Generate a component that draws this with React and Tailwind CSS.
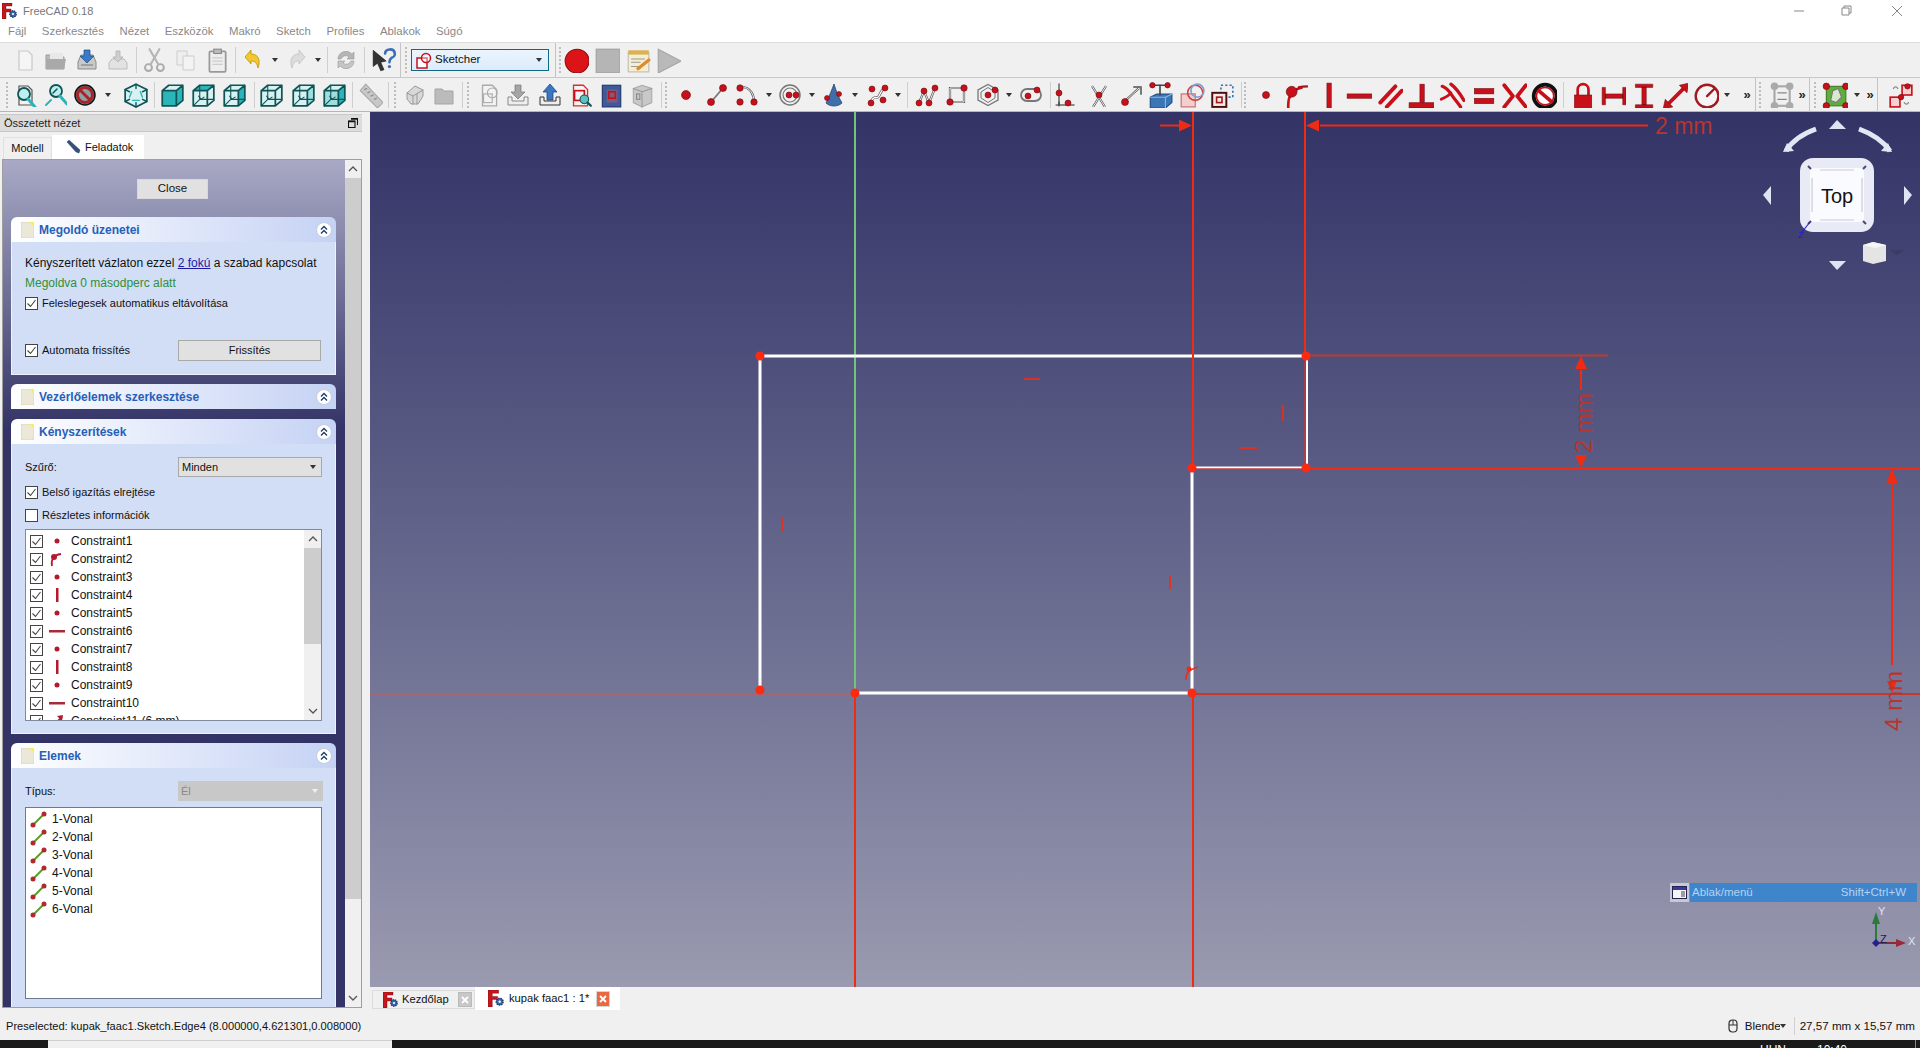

import React from "react";

const RED = "#c8101a", DK = "#6e0a10", TEAL = "#2bb5b8", TD = "#0f5557";
const D = ({ x, y, r = 3 }) => <circle cx={x} cy={y} r={r} fill={RED} stroke={DK} strokeWidth=".6" />;
const S = ({ s = 24, children }) => <svg width={s} height={s} viewBox="0 0 24 24" className="block shrink-0">{children}</svg>;
const G = ({ d, w = 1.6, c = "#444", f = "none" }) => <path d={d} stroke={c} strokeWidth={w} fill={f} strokeLinecap="round" strokeLinejoin="round" />;
const W = ({ d, w = 2.2 }) => <><path d={d} stroke="#555" strokeWidth={w} fill="none" /><path d={d} stroke="#fff" strokeWidth={w - 1.3} fill="none" /></>;

const Cube = ({ f = "#d9f1f1", t = "#d9f1f1", r = "#d9f1f1", inner }) => (
  <S s={26}>
    <polygon points="3,8 16,8 16,22 3,22" fill={f} />
    <polygon points="3,8 9,3 22,3 16,8" fill={t} />
    <polygon points="16,8 22,3 22,17 16,22" fill={r} />
    <G d="M3 8h13v14H3zM3 8l6-5h13v14l-6 5M16 8l6-5" c={TD} w="1.6" />
    {inner && <G d="M9 3v13H22M9 16l-6 6" c={TD} w="1" />}
    {inner && <G d="M8 13l2 3 3-2" c={TD} w="1" />}
  </S>
);
const Iso = () => (
  <S s={26}>
    <polygon points="12,2 22,7 22,18 12,23 2,18 2,7" fill="#d9f1f1" stroke={TD} strokeWidth="1.6" />
    <G d="M2 7l4 2M22 7l-4 2M12 23v-4M12 2v4M2 18l4-2M22 18l-4-2" c={TD} w="1.3" />
    <G d="M8 9l-2 5M16 9l2 5M9 17h6" c={TEAL} w="1.3" />
  </S>
);
const Mag = ({ x = 10, y = 9 }) => <><circle cx={x} cy={y} r="6" fill="#bfeeee" stroke={TD} strokeWidth="1.8" /><G d={`M${x + 4} ${y + 5}l7 8`} c={TEAL} w="3" /></>;

const Logo = ({ s = 16 }) => (
  <svg width={s} height={s} viewBox="0 0 16 16" className="block shrink-0">
    <path d="M0 0h10v3H4v3h5v3H4v7H0z" fill="#c4161c" stroke="#6b0a0a" strokeWidth=".4" />
    <circle cx="11" cy="11" r="3.2" fill="#3a66a8" stroke="#1d3d73" strokeWidth="1.4" strokeDasharray="1.4 .8" />
    <circle cx="11" cy="11" r="1.1" fill="#fff" />
  </svg>
);

const Arrow = () => <div className="w-0 h-0 shrink-0 border-x-[3.5px] border-x-transparent border-t-[4px] border-t-[#333]" />;
const More = () => <span className="shrink-0 text-[13px] font-bold text-[#222] leading-none">»</span>;
const Sep = () => <div className="w-px shrink-0 h-[26px] bg-[#cfcfcf]" />;
const Full = () => <div className="w-px shrink-0 h-[34px] bg-[#c4c4c4]" />;
const Handle = () => <div className="w-[2px] shrink-0 h-[26px] border-l-2 border-dotted border-[#bdbdbd]" />;

const Bar = ({ items, h }) => (
  <div className={`flex items-center ${h}`}>
    {items.map((it, i) => (
      <div key={i} className="w-0 h-full flex items-center justify-center shrink-0" style={{ marginLeft: it[0] - (i ? items[i - 1][0] : 0) }}>
        {it[1]}
      </div>
    ))}
  </div>
);

const Page = ({ c = "#f5f5f5", b = "#c9c9c9" }) => <path d="M6 3h9l4 4v15H6z" fill={c} stroke={b} strokeWidth="1.2" />;

const t1 = [
  [25, <S><Page /></S>],
  [56, <S><path d="M2 7h7l2 2h9v12H2z" fill="#b9b9b9" stroke="#9a9a9a" /><path d="M6 5h13v6H6z" fill="#e8e8e8" /><path d="M2 11h20l-2 10H2z" fill="#a9a9a9" /></S>],
  [87, <S><path d="M3 14l3-7h12l3 7v7H3z" fill="#c9c9c9" stroke="#8a8a8a" /><path d="M9 2h6v6h4l-7 7-7-7h4z" fill="#3a7bc8" stroke="#1d4a86" strokeWidth=".7" /><path d="M6 17h12" stroke="#777" /></S>],
  [118, <S><path d="M3 15l3-4h12l3 4v6H3z" fill="#e2e2e2" stroke="#bbb" /><path d="M10 3h4v6h3l-5 5-5-5h3z" fill="#cfcfcf" stroke="#aaa" strokeWidth=".7" /></S>],
  [136, <Sep />],
  [155, <S s={26}><circle cx="6" cy="19" r="3.2" fill="none" stroke="#aaa" strokeWidth="1.8" /><circle cx="17" cy="19" r="3.2" fill="none" stroke="#aaa" strokeWidth="1.8" /><G d="M8 16L16 2M15 16L7 2" c="#b5b5b5" w="2" /></S>],
  [186, <S><path d="M3 3h10v14H3z" fill="#eee" stroke="#ccc" /><path d="M9 8h11v14H9z" fill="#f3f3f3" stroke="#ccc" /></S>],
  [217, <S s={26}><rect x="5" y="4" width="15" height="19" fill="#eee" stroke="#999" strokeWidth="1.6" rx="1" /><rect x="9" y="2" width="7" height="4" fill="#bbb" stroke="#888" /><G d="M8 10h9M8 13h9M8 16h9" c="#ccc" w="1" /></S>],
  [235, <Sep />],
  [253, <S><path d="M4 9l6-7v4c7 0 10 6 7 14-1-5-3-7-7-7v3z" fill="#f2c82e" stroke="#b98f12" strokeWidth=".8" /></S>],
  [275, <Arrow />],
  [297, <S><path d="M20 9l-6-7v4C7 6 4 12 7 20c1-5 3-7 7-7v3z" fill="#dcdcdc" stroke="#c2c2c2" strokeWidth=".8" /></S>],
  [318, <Arrow />],
  [327, <Sep />],
  [346, <S><path d="M4 11a8 8 0 0 1 14-5l2-2v7h-7l2-2a5 5 0 0 0-8 2z" fill="#b5b5b5" stroke="#999" strokeWidth=".6" /><path d="M20 13a8 8 0 0 1-14 5l-2 2v-7h7l-2 2a5 5 0 0 0 8-2z" fill="#c5c5c5" stroke="#999" strokeWidth=".6" /></S>],
  [364, <Sep />],
  [384, <S s={26}><path d="M2 3l0 15 4-3 3 7 3-1-3-7 5-1z" fill="#333" stroke="#111" strokeWidth=".5" /><G d="M13 6a4.5 4 0 1 1 6 4c-1.500 1-2 2-2 4" c="#3a6fb5" w="2.4" /><circle cx="17" cy="18" r="1.500" fill="#3a6fb5" /></S>],
  [400, <Full />],
  [406, <Handle />],
  [480, (
    <div className="w-[138px] h-[22px] shrink-0 flex items-center bg-gradient-to-b from-[#ebf4fc] to-[#dcecfc] border border-[#0f6a86] pl-[4px] pr-[6px] gap-[2px] text-[#111] text-[11.5px]">
      <svg width="17" height="17" viewBox="0 0 17 17" className="block shrink-0"><rect x="1" y="6" width="10" height="10" fill="#fff" stroke={RED} strokeWidth="1.500" /><circle cx="10" cy="6" r="4.500" fill="#fff" fillOpacity=".4" stroke={RED} strokeWidth="1.500" /></svg>
      <span className="flex-1">Sketcher</span>
      <Arrow />
    </div>
  )],
  [555, <Full />],
  [560, <Handle />],
  [576, <S s={26}><circle cx="13" cy="13" r="11" fill="#dc1418" stroke="#8a0d10" strokeWidth="1" /></S>],
  [607, <S s={26}><rect x="2" y="2" width="22" height="22" fill="#b5b5b5" stroke="#a0a0a0" /></S>],
  [638, <S s={26}><rect x="3" y="5" width="19" height="18" fill="#f5efd0" stroke="#bbb" /><rect x="3" y="3" width="19" height="4" fill="#d9b25a" /><G d="M6 11h12M6 14h8M6 18h7" c="#999" w="1" /><G d="M12 20l10-8" c="#e08a28" w="3" /></S>],
  [668, <S s={26}><polygon points="3,2 24,13 3,24" fill="#b9b9b9" stroke="#a5a5a5" /></S>],
];

const t2 = [
  [7, <Handle />],
  [25, <S><Page c="#f3f3f3" b="#555" /><Mag x={11} y={11} /></S>],
  [55, <S><Mag x={13} y={8} /><G d="M3 22l5-5" c={TEAL} w="2" /><G d="M14 6l-4 4" c={TD} w="1.500" /></S>],
  [85, <S><circle cx="12" cy="12" r="10" fill="#2aa0a0" stroke="#111" strokeWidth="1.500" /><circle cx="12" cy="12" r="7.500" fill="#88a5a5" stroke="#b02028" strokeWidth="3" /><path d="M6 6l12 12" stroke="#b02028" strokeWidth="3" /></S>],
  [108, <Arrow />],
  [136, <Iso />],
  [154, <Sep />],
  [172, <Cube f={TEAL} t="#d9f1f1" r={TEAL} />],
  [203, <Cube f="#d9f1f1" t={TEAL} r="#d9f1f1" inner />],
  [234, <Cube f="#d9f1f1" t="#d9f1f1" r={TEAL} inner />],
  [254, <Sep />],
  [271, <Cube inner />],
  [303, <Cube inner r="#a0dede" />],
  [334, <Cube f="#a0dede" t="#d9f1f1" r={TEAL} inner />],
  [352, <Sep />],
  [370, <S s={26}><path d="M3 8l5-6 16 17-5 5z" fill="#c8c8c8" stroke="#aaa" /><G d="M7 7l2-1M10 10l2-1M13 13l2-1M16 16l2-1" c="#888" w="1" /></S>],
  [388, <Sep />],
  [395, <Handle />],
  [415, <S><path d="M4 10l8-7 8 4v6l-5 8-7 0-4-5z" fill="#d8d8d8" stroke="#999" /><G d="M4 10l6 3v8M10 13l10-6M14 11v10" c="#999" w="1" /></S>],
  [444, <S><path d="M3 6h7l2 2h9v13H3z" fill="#bbb" stroke="#a5a5a5" /></S>],
  [462, <Sep />],
  [468, <Handle />],
  [489, <S s={26}><Page c="#f3f3f3" b="#aaa" /><rect x="7" y="11" width="8" height="8" fill="none" stroke="#aaa" /><circle cx="15" cy="10" r="4.500" fill="none" stroke="#aaa" /></S>],
  [518, <S><path d="M9 2h6v7h4l-7 7-7-7h4z" fill="#a5a5a5" stroke="#777" strokeWidth=".7" /><path d="M2 14v8h20v-8h-4v4H6v-4z" fill="#eee" stroke="#888" /></S>],
  [550, <S><path d="M12 1l7 8h-4v8H9V9H5z" fill="#3a77c0" stroke="#1e4a84" strokeWidth=".8" /><path d="M2 14v8h20v-8h-4v4H6v-4z" fill="#eee" stroke="#333" /></S>],
  [580, <S s={26}><Page c="#f7f2f2" b="#c33" /><rect x="7" y="8" width="9" height="9" fill="none" stroke={RED} strokeWidth="1.500" /><circle cx="16" cy="16" r="4" fill="#5fc0c0" stroke={TD} /><G d="M19 19l3 3" c={TD} w="2" /></S>],
  [611, <S s={26}><rect x="4" y="3" width="17" height="20" fill="#3b5b9b" stroke="#20336a" /><rect x="8" y="7" width="10" height="12" fill="#7b5b80" /><rect x="10" y="9" width="6" height="6" fill="none" stroke={RED} strokeWidth="1.500" /></S>],
  [642, <S s={26}><path d="M4 6l8-3 9 3v13l-9 4-8-4z" fill="#c8c8c8" stroke="#aaa" /><G d="M12 9v14M4 6l8 3 9-3" c="#999" w="1" /><rect x="7" y="11" width="3" height="5" fill="none" stroke="#888" /></S>],
  [661, <Sep />],
  [666, <Handle />],
  [686, <S><D x={12} y={12} r={4.5} /></S>],
  [717, <S><G d="M6 19L18 5" w="1.800" c="#777" /><D x={6} y={19} r={3.500} /><D x={18} y={5} r={3.500} /></S>],
  [747, <S><W d="M6 4C16 4 19 12 19 19" /><D x={5} y={5} r={3.200} /><D x={5} y={19} r={3.200} /><D x={19} y={19} r={3.200} /></S>],
  [769, <Arrow />],
  [790, <S><circle cx="12" cy="12" r="10" fill="none" stroke="#777" strokeWidth="1.500" /><circle cx="12" cy="12" r="7" fill="none" stroke="#777" strokeWidth="1.200" /><D x={11} y={12} r={3} /><D x={18} y={12} r={3} /></S>],
  [812, <Arrow />],
  [834, <S><path d="M12 1C9 9 6 16 4 20c4 4 12 4 16 0C17 15 14 8 12 1z" fill="#3f6ea8" stroke="#23476f" strokeWidth=".8" /><D x={5} y={15} r={2.500} /><D x={17} y={11} r={2.500} /></S>],
  [855, <Arrow />],
  [878, <S><W d="M5 19c3-8 6-2 8-6s3-7 6-8" w="2.600" /><D x={5} y={20} r={3} /><D x={6} y={6} r={3} /><D x={19} y={5} r={3} /><D x={17} y={17} r={3} /></S>],
  [898, <Arrow />],
  [907, <Sep />],
  [927, <S><W d="M4 20L9 8l5 12 6-15" /><D x={4} y={20} r={3} /><D x={9} y={8} r={3} /><D x={14} y={20} r={3} /><D x={20} y={5} r={3} /></S>],
  [957, <S><W d="M5 5h14v14H5z" /><D x={19} y={5} r={3.200} /><D x={5} y={19} r={3.200} /></S>],
  [988, <S><path d="M12 1.500L22 7v10l-10 5.500L2 17V7z" fill="none" stroke="#777" strokeWidth="1.300" /><path d="M12 4.500L19 9v6l-7 4.500L5 15V9z" fill="none" stroke="#777" /><D x={12} y={12} r={3} /><D x={19} y={7} r={3} /></S>],
  [1009, <Arrow />],
  [1031, <S><rect x="2" y="6" width="20" height="12" rx="6" fill="none" stroke="#777" strokeWidth="1.800" /><D x={9} y={13} r={3} /><D x={18} y={7} r={3} /></S>],
  [1050, <Sep />],
  [1065, <S><G d="M6 1v22M7 22h14" c="#666" w="1.500" /><D x={6} y={10} r={3} /><D x={15} y={20} r={3} /><G d="M3 22h3v-3" c="#333" w="1" /></S>],
  [1099, <S><W d="M5 3l13 21M19 3L6 24" /><D x={12} y={12} r={3} /></S>],
  [1131, <S><G d="M15 4h7v7" c="#777" w="2" /><W d="M6 18L20 5" /><D x={6} y={19} r={3.500} /></S>],
  [1160, <S s={26}><path d="M3 14l6-3h14v8l-6 5H3z" fill="#3a76b5" stroke="#1e4a7d" /><path d="M3 14h14v10M17 14l6-3" stroke="#8bb8e0" fill="none" /><G d="M12 3v9" c="#444" w="1.500" /><G d="M5 3h14" c="#444" w="1.500" /><D x={5} y={3} r={2.500} /><D x={19} y={3} r={2.500} /></S>],
  [1192, <S s={26}><rect x="2" y="11" width="13" height="12" fill="#f3b8b8" fillOpacity=".6" stroke="#c66" /><circle cx="15" cy="10" r="7" fill="none" stroke="#c44" strokeWidth="1.500" /><circle cx="17" cy="8" r="6" fill="none" stroke="#7fa0d0" strokeWidth="1.500" /></S>],
  [1222, <S s={26}><rect x="11" y="3" width="11" height="11" fill="none" stroke="#3a6fb5" strokeWidth="1.500" strokeDasharray="2 2" /><rect x="3" y="10" width="13" height="13" fill="#f5eaea" stroke="#4a1010" strokeWidth="1.800" /><rect x="7" y="14" width="5" height="5" fill="none" stroke="#a01818" strokeWidth="1.500" /></S>],
  [1241, <Sep />],
  [1245, <Handle />],
  [1266, <S><D x={12} y={12} r={3.5} /></S>],
  [1296, <S s={26}><path d="M5 25C4 14 7 7 18 5" stroke={RED} strokeWidth="2.500" fill="none" /><D x={8} y={9} r={5} /><path d="M14 5c4-1 6-1 9-1" stroke="#a01818" strokeWidth="2" fill="none" /></S>],
  [1328, <S s={26}><rect x="11" y="1" width="4" height="24" fill={RED} stroke={DK} strokeWidth=".5" /></S>],
  [1359, <S s={26}><rect x="1" y="11" width="24" height="4" fill={RED} stroke={DK} strokeWidth=".5" /></S>],
  [1390, <S s={26}><G d="M3 19L17 4M9 23L23 8" c={RED} w="3.500" /></S>],
  [1421, <S s={26}><path d="M1 19h24v5H1z" fill={RED} stroke={DK} strokeWidth=".5" /><rect x="11" y="2" width="4" height="17" fill={RED} stroke={DK} strokeWidth=".5" /></S>],
  [1452, <S s={26}><G d="M3 4c3 1 6 4 8 7s6 8 9 12" c={RED} w="3" /><G d="M11 2c4 3 8 8 12 15" c={RED} w="3" /><G d="M2 16c4-2 7-3 9-6" c={RED} w="2.5" /></S>],
  [1483, <S s={26}><rect x="4" y="6" width="18" height="5" fill={RED} stroke={DK} strokeWidth=".5" /><rect x="4" y="15" width="18" height="5" fill={RED} stroke={DK} strokeWidth=".5" /></S>],
  [1514, <S s={26}><G d="M3 3l8 10-8 10" c={RED} w="3.500" /><G d="M23 3l-8 10 8 10" c={RED} w="3.500" /></S>],
  [1544, <S s={26}><circle cx="13" cy="13" r="10.500" fill="#fff" stroke="#111" strokeWidth="3.500" /><circle cx="13" cy="13" r="8" fill="none" stroke={RED} strokeWidth="1.500" /><path d="M6 7l14 12" stroke={RED} strokeWidth="3.500" /></S>],
  [1563, <Sep />],
  [1582, <S s={26}><path d="M8 12V7a5 5 0 0 1 10 0v5" fill="none" stroke={RED} strokeWidth="2.500" /><rect x="5" y="12" width="16" height="13" fill={RED} stroke={DK} strokeWidth=".5" /></S>],
  [1613, <S s={26}><path d="M2 5h3v16H2zM21 5h3v16h-3zM5 11h16v4H5z" fill={RED} stroke={DK} strokeWidth=".5" /></S>],
  [1643, <S s={26}><path d="M5 2h16v3H5zM5 21h16v3H5zM11 5h4v16h-4z" fill={RED} stroke={DK} strokeWidth=".5" /></S>],
  [1675, <S s={26}><G d="M5 21L21 5" c={RED} w="3.500" /><path d="M1 25l2-9 7 7zM25 1l-2 9-7-7z" fill={RED} stroke={DK} strokeWidth=".5" /></S>],
  [1706, <S s={26}><circle cx="13" cy="13" r="10.500" fill="#fff" fillOpacity=".3" stroke="#a01820" strokeWidth="2.200" /><G d="M13 13l7-7" c="#a01820" w="2.200" /></S>],
  [1727, <Arrow />],
  [1747, <More />],
  [1755, <Full />],
  [1760, <Handle />],
  [1781, <S s={26}><rect x="6" y="4" width="14" height="18" fill="none" stroke="#aaa" strokeWidth="2" /><circle cx="6" cy="4" r="3.500" fill="#aaa" /><circle cx="20" cy="4" r="3.500" fill="#aaa" /><circle cx="6" cy="22" r="3.500" fill="#aaa" /><circle cx="20" cy="22" r="3.500" fill="#aaa" /><G d="M9 10h8M9 16h8" c="#888" w="1" /></S>],
  [1802, <More />],
  [1809, <Full />],
  [1815, <Handle />],
  [1835, <S s={26}><rect x="4" y="4" width="18" height="18" fill="#5fae3d" stroke="#3d7d22" /><path d="M8 17l2-9 5-2 3 8-5 5z" fill="#d8e6d2" stroke="#777" /><D x={4} y={22} r={3} /><D x={22} y={22} r={3} /><D x={22} y={4} r={3} /><D x={4} y={4} r={3} /></S>],
  [1857, <Arrow />],
  [1870, <More />],
  [1877, <Full />],
  [1901, <S s={26}><rect x="13" y="3" width="9" height="9" fill="#f4d0d0" stroke={RED} strokeWidth="1.500" /><rect x="2" y="14" width="9" height="9" fill="#f4d0d0" stroke={RED} strokeWidth="1.500" /><D x={18} y={4} r={2.500} /><D x={12} y={14} r={2.500} /><G d="M5 6c1-2 3-2 4 0" c="#888" w="1.200" /><G d="M15 19c1 2 3 2 4 0" c="#888" w="1.200" /></S>],
];

const Check = ({ on = true }) => (
  <div className="w-[13px] h-[13px] border border-[#444] bg-white shrink-0 flex items-center justify-center">
    {on && <svg width="11" height="11" viewBox="0 0 11 11" className="block"><path d="M1.500 5.500l3 3 5-6.500" stroke="#444" strokeWidth="1.100" fill="none" /></svg>}
  </div>
);

const Group = ({ title, children }) => (
  <section className="w-[325px]">
    <header className="h-[25px] rounded-t-[6px] bg-gradient-to-r from-white to-[#c5d2f4] flex items-center pl-[10px] pr-[4px]">
      <svg width="13" height="16" viewBox="0 0 13 16" className="block shrink-0"><path d="M0 0h9l4 4v12H0z" fill="#ece8d8" stroke="#d5d0c0" strokeWidth=".8" /><path d="M8 0h5v5z" fill="#f6ee60" /></svg>
      <span className="ml-[5px] flex-1 font-bold text-[#2560b8] text-[12px]">{title}</span>
      <div className="w-[16px] h-[16px] rounded-full bg-white border border-[#c3cce0] flex items-center justify-center">
        <svg width="10" height="10" viewBox="0 0 10 10" className="block"><path d="M2 4.500l3-3 3 3M2 8.500l3-3 3 3" stroke="#1c3a66" strokeWidth="1.300" fill="none" /></svg>
      </div>
    </header>
    {children && <div className="bg-[#d2def6] border-x border-b border-[#eef2fb] px-[13px]">{children}</div>}
  </section>
);

const rowIcon = [
  <circle cx="8" cy="8" r="2.500" fill="#b41a2e" />,
  <><path d="M3 15C2 9 4 4 12 3" stroke="#b41a2e" strokeWidth="1.800" fill="none" /><circle cx="5" cy="6" r="3" fill="#b41a2e" /></>,
  <circle cx="8" cy="8" r="2.500" fill="#b41a2e" />,
  <rect x="7" y="1" width="2.500" height="14" fill="#b41a2e" />,
  <circle cx="8" cy="8" r="2.500" fill="#b41a2e" />,
  <rect x="0" y="7" width="16" height="2.500" fill="#a82a3a" />,
  <circle cx="8" cy="8" r="2.500" fill="#b41a2e" />,
  <rect x="7" y="1" width="2.500" height="14" fill="#b41a2e" />,
  <circle cx="8" cy="8" r="2.500" fill="#b41a2e" />,
  <rect x="0" y="7" width="16" height="2.500" fill="#a82a3a" />,
  <><path d="M3 14L13 4" stroke="#b41a2e" strokeWidth="2" /><path d="M14 2l-1 6-5-5z" fill="#b41a2e" /></>,
];
const conRows = ["Constraint1","Constraint2","Constraint3","Constraint4","Constraint5","Constraint6","Constraint7","Constraint8","Constraint9","Constraint10","Constraint11 (6 mm)"];
const vonal = ["1-Vonal","2-Vonal","3-Vonal","4-Vonal","5-Vonal","6-Vonal"];

const Up = ({ d = "M1 6l4-4 4 4" }) => <svg width="10" height="8" viewBox="0 0 10 8" className="block"><path d={d} stroke="#555" strokeWidth="1.300" fill="none" /></svg>;

const Panel = () => (
  <div className="w-[370px] flex flex-col shrink-0 h-full text-[11px]">
    <div className="mt-[2px] mr-[8px] h-[18px] bg-[#dcdcdc] border-y border-[#c8c8c8] flex items-center px-[4px] text-[#222]">
      <span className="flex-1">Összetett nézet</span>
      <svg width="10" height="10" viewBox="0 0 10 10" className="block"><path d="M3 .500h6.500V7M.500 3h6.500v6.500H.500z" fill="none" stroke="#111" strokeWidth="1.100" /><path d="M.500 3.500h6.500M3 1h6.500" stroke="#111" strokeWidth="1.500" /></svg>
    </div>
    <div className="mt-[3px] h-[24px] flex items-end pl-[3px] text-[#111]">
      <div className="w-[49px] h-[22px] bg-[#f0f0f0] flex items-center justify-center border-t border-x border-[#e0e0e0]">Modell</div>
      <div className="w-[92px] h-[24px] bg-white flex items-center pl-[14px] gap-[4px]">
        <svg width="15" height="15" viewBox="0 0 15 15" className="block"><path d="M1 2l2-2 11 10-1 3-3-1z" fill="#33517f" stroke="#1c2f50" strokeWidth=".4" /></svg>
        <span>Feladatok</span>
      </div>
    </div>
    <div className="h-[849px] ml-[2px] mr-[8px] border border-[#9e9e9e] flex overflow-hidden">
      <div className="flex-1 overflow-hidden bg-[linear-gradient(#a9a9c6_0px,#333366_270px)] flex flex-col items-start">
        <button className="mt-[19px] ml-[134px] w-[71px] h-[20px] bg-[#e1e1e1] border border-[#d8d8d8] text-[#111] shrink-0 text-[11.5px]">Close</button>
        <div className="w-[325px] ml-[8px] mt-[18px] flex flex-col gap-[9px] shrink-0">
          <Group title="Megoldó üzenetei">
            <div className="pt-[13px] h-[29px] leading-[16px] whitespace-nowrap text-[#111] text-[12px]">Kényszerített vázlaton ezzel <span className="text-[#1a1aa8] underline">2 fokú</span> a szabad kapcsolat</div>
            <div className="mt-[4px] h-[16px] leading-[16px] text-[#2f8f3a] text-[12px]">Megoldva 0 másodperc alatt</div>
            <label className="mt-[4px] h-[16px] flex items-center gap-[4px]"><Check /><span>Feleslegesek automatikus eltávolítása</span></label>
            <div className="mt-[28px] mb-[13px] h-[22px] flex items-center"><Check /><span className="ml-[4px] flex-1">Automata frissítés</span><div className="w-[143px] h-[21px] mr-[1px] bg-[#e1e1e1] border border-[#a9a9a9] flex items-center justify-center">Frissítés</div></div>
          </Group>
          <Group title="Vezérlőelemek szerkesztése" />
          <div className="mt-[1px]">
            <Group title="Kényszerítések">
              <div className="pt-[13px] h-[33px] flex items-center"><span className="flex-1">Szűrő:</span><div className="w-[144px] h-[20px] bg-[#e1e1e1] border border-[#a9a9a9] flex items-center pl-[3px] pr-[5px]"><span className="flex-1">Minden</span><Arrow /></div></div>
              <label className="mt-[7px] h-[16px] flex items-center gap-[4px]"><Check /><span>Belső igazítás elrejtése</span></label>
              <label className="mt-[7px] h-[16px] flex items-center gap-[4px]"><Check on={false} /><span>Részletes információk</span></label>
              <div className="mt-[6px] mb-[12px] h-[192px] border border-[#7f8aa0] bg-white flex overflow-hidden text-[12px]">
                <div className="flex-1 pl-[4px] pt-[2px] overflow-hidden">
                  {conRows.map((t, i) => (
                    <div key={t} className="h-[18px] flex items-center shrink-0">
                      <Check />
                      <svg width="16" height="16" viewBox="0 0 16 16" className="block ml-[6px]">{rowIcon[i]}</svg>
                      <span className="ml-[6px] whitespace-nowrap">{t}</span>
                    </div>
                  ))}
                </div>
                <div className="w-[17px] bg-[#f0f0f0] flex flex-col items-center">
                  <div className="h-[18px] flex items-center"><Up /></div>
                  <div className="w-full h-[96px] bg-[#cdcdcd]" />
                  <div className="flex-1" />
                  <div className="h-[18px] flex items-center"><Up d="M1 2l4 4 4-4" /></div>
                </div>
              </div>
            </Group>
          </div>
          <Group title="Elemek">
            <div className="pt-[13px] h-[33px] flex items-center"><span className="flex-1">Típus:</span><div className="w-[145px] h-[20px] bg-[#c8c8c8] text-[#8a8a8a] flex items-center pl-[3px] pr-[5px] mr-[-1px]"><span className="flex-1">Él</span><div className="w-0 h-0 border-x-[3.500px] border-x-transparent border-t-[4px] border-t-[#f0f0f0]" /></div></div>
            <div className="mt-[6px] mb-[13px] h-[192px] border border-[#6f7a90] bg-white pl-[4px] pt-[2px] text-[12px]">
              {vonal.map((t) => (
                <div key={t} className="h-[18px] flex items-center">
                  <svg width="17" height="17" viewBox="0 0 17 17" className="block"><path d="M3 14L14 3" stroke="#5c9a2e" strokeWidth="2" /><circle cx="3" cy="14" r="2.500" fill="#b02a30" /><circle cx="14" cy="3" r="2.500" fill="#b02a30" /></svg>
                  <span className="ml-[5px]">{t}</span>
                </div>
              ))}
            </div>
          </Group>
        </div>
      </div>
      <div className="w-[16px] bg-[#f0f0f0] flex flex-col items-center shrink-0">
        <div className="h-[18px] flex items-center"><Up /></div>
        <div className="w-full h-[721px] bg-[#cdcdcd]" />
        <div className="flex-1" />
        <div className="h-[18px] flex items-center"><Up d="M1 2l4 4 4-4" /></div>
      </div>
    </div>
  </div>
);

const Sketch = () => {
  const red = "#ee2c14", dark = "#c23a2c", dim = "#b8342e";
  return (
    <svg width="1550" height="875" viewBox="370 112 1550 875" className="absolute inset-0 block">
      <line x1="370" y1="694" x2="855" y2="694" stroke="#e8504a" strokeWidth="1" opacity=".8" />
      <line x1="855" y1="112" x2="855" y2="693" stroke="#6fc678" strokeWidth="2" />
      <line x1="855" y1="693" x2="855" y2="987" stroke={red} strokeWidth="2" />
      <path d="M760 356V690M760 356H1306M855 693H1192M1192 468V693" stroke="#fff" strokeWidth="3" fill="none" />
      <path d="M1192 467.500H1306M1307 356V468" stroke="#fff" strokeWidth="2" fill="none" />
      <line x1="1193" y1="112" x2="1193" y2="468" stroke={red} strokeWidth="2" />
      <line x1="1193" y1="693" x2="1193" y2="987" stroke={red} strokeWidth="2" />
      <line x1="1305" y1="112" x2="1305" y2="356" stroke={red} strokeWidth="2" />
      <line x1="1305" y1="356" x2="1305" y2="468" stroke={red} strokeWidth="1" />
      <line x1="1193" y1="469" x2="1306" y2="469" stroke={red} strokeWidth="1" />
      <line x1="1306" y1="355.500" x2="1608" y2="355.500" stroke={dark} strokeWidth="2" />
      <line x1="1306" y1="468.500" x2="1920" y2="468.500" stroke={red} strokeWidth="2" />
      <line x1="1193" y1="694" x2="1920" y2="694" stroke={dark} strokeWidth="2" />

      <path d="M1160 125.500H1180M1320 125.500H1648M1581 370V390M1892 484V665" stroke={red} strokeWidth="2" fill="none" />
      <path d="M1192 125.500l-13-6v12zM1306 125.500l13-6v12zM1581 356l-6 13h12zM1581 468l-6-13h12zM1892 468l-6 16h12zM1892 693l-5-12h10z" fill={red} />
      <text x="1655" y="134" fontFamily="Liberation Sans" fontSize="23" fill={dim}>2 mm</text>
      <text transform="translate(1592 453) rotate(-90)" fontFamily="Liberation Sans" fontSize="24" fill={dim}>2 mm</text>
      <text transform="translate(1902 731) rotate(-90)" fontFamily="Liberation Sans" fontSize="24" fill={dim}>4 mm</text>

      <path d="M1024 379H1040M1240 448H1257" stroke={red} strokeWidth="2" opacity=".85" />
      <path d="M782 517V532M1283 405V421M1170 576V589" stroke={red} strokeWidth="2" opacity=".85" />
      <path d="M1186 680C1186 673 1188 670 1198 667" stroke={red} strokeWidth="1.500" fill="none" />
      <circle cx="1189" cy="669" r="2.500" fill={red} />

      {[[760,356],[760,690],[855,693],[1192,693],[1192,468],[1306,468],[1306,356]].map(([x,y]) => <circle key={x+"-"+y} cx={x} cy={y} r="4.500" fill="#fb2a10" />)}

      {/* navigation cube */}
      <g fill="#dfe3f2">
        <polygon points="1829,129 1837,120 1846,129" />
        <polygon points="1763,195 1771,186 1771,205" />
        <polygon points="1912,195 1904,186 1904,205" />
        <polygon points="1829,261 1846,261 1837,270" />
      </g>
      <path d="M1816 129C1802 134 1792 141 1786 151M1859 129C1873 134 1883 141 1890 151" stroke="#e3e7f4" strokeWidth="5" fill="none" />
      <path d="M1783 152l11-1-7-8zM1892 152l-11-1 7-8z" fill="#e3e7f4" />
      <rect x="1800" y="158" width="74" height="74" rx="13" fill="#e8ebf5" />
      <rect x="1810" y="168" width="54" height="54" rx="3" fill="#fafbfe" />
      <path d="M1820 170h34M1820 220h34M1812 178v34M1862 178v34" stroke="#c9ccd6" strokeWidth="1.200" />
      <path d="M1808 166l3 3M1866 166l-3 3M1808 224l3-3M1866 224l-3-3" stroke="#4a4a70" strokeWidth="2" />
      <path d="M1810 222l-8 10" stroke="#2222cc" strokeWidth="1.200" />
      <text x="1798" y="238" fontFamily="Liberation Sans" fontStyle="italic" fontSize="11" fill="#2222cc">z</text>
      <text x="1837" y="203" textAnchor="middle" fontFamily="Liberation Sans" fontSize="20" fill="#111">Top</text>
      <polygon points="1863,245 1873,242 1886,245 1886,261 1873,264 1863,261" fill="#e4e4e4" />
      <polygon points="1863,245 1873,242 1886,245 1875,248" fill="#f5f5f5" />
      <polygon points="1890,250 1904,250 1897,255" fill="#3c3c60" />

      {/* axis */}
      <path d="M1876 943V918" stroke="#2a7a3a" strokeWidth="2" />
      <polygon points="1876,912 1872,924 1880,924" fill="#2a7a3a" />
      <path d="M1876 943H1898" stroke="#8c2a3a" strokeWidth="2" />
      <polygon points="1906,943 1896,939 1896,947" fill="#9a2a3a" />
      <polygon points="1876,939 1880,943 1876,947 1872,943" fill="#22228a" />
      <g fontFamily="Liberation Sans" fontSize="11" fill="#e4e4ee">
        <text x="1878" y="915">Y</text>
        <text x="1908" y="945">X</text>
        <text x="1880" y="943" fill="#1a1a50">Z</text>
      </g>
    </svg>
  );
};

const Tab = ({ active, label }) => (
  <div className={active ? "w-[145px] h-[23px] bg-white flex items-center pl-[13px] gap-[4px]" : "w-[103px] h-[19px] mt-[3px] bg-[#f0f0f0] border border-[#dcdcdc] flex items-center pl-[10px] gap-[3px]"}>
    <Logo s={active ? 17 : 16} />
    <span className="whitespace-nowrap text-[#111] text-[11.2px]">{label}</span>
    <div className={active ? "ml-[3px] w-[14px] h-[16px] bg-[#e8683f] border border-[#d5d5d5] flex items-center justify-center" : "ml-[6px] w-[14px] h-[15px] bg-[#c8c8c8] border border-[#bbb] flex items-center justify-center"}>
      <svg width="8" height="8" viewBox="0 0 8 8" className="block"><path d="M1 1l6 6M7 1l-6 6" stroke="#fff" strokeWidth="1.800" /></svg>
    </div>
  </div>
);

export default function App() {
  return (
    <div className="w-[1920px] h-[1048px] flex flex-col overflow-hidden bg-[#f0f0f0] font-['Liberation_Sans',sans-serif] text-[12px] text-[#111]">
      <div className="h-[22px] bg-white flex items-center pl-[2px] text-[#777]">
        <Logo />
        <span className="ml-[5px] text-[11px]">FreeCAD 0.18</span>
        <div className="flex-1" />
        <svg width="130" height="16" viewBox="0 0 130 16" className="block mr-[6px]"><path d="M10 8h10" stroke="#888" /><path d="M58 5h7v7h-7zM60 5V3h7v7h-2" fill="none" stroke="#888" /><path d="M108 3l10 10M118 3l-10 10" stroke="#888" /></svg>
      </div>
      <nav className="h-[21px] bg-white flex items-center text-[#888] text-[11.4px] pl-[8px] gap-[15.5px] border-b border-[#dedede]">
        {["Fájl","Szerkesztés","Nézet","Eszközök","Makró","Sketch","Profiles","Ablakok","Súgó"].map((m) => <span key={m}>{m}</span>)}
      </nav>
      <Bar items={t1} h="h-[34px]" />
      <div className="border-t border-[#c9c9c9] border-b border-b-[#b5b5b5]"><Bar items={t2} h="h-[33px]" /></div>
      <div className="h-[900px] flex shrink-0">
        <Panel />
        <div className="flex-1 flex flex-col">
          <div className="relative h-[875px] bg-gradient-to-b from-[#333366] to-[#9a9ab0] overflow-hidden">
            <Sketch />
            <div className="absolute left-[1300px] top-[770px] flex items-center h-[21px] text-[11.5px]">
              <div className="w-[19px] h-[19px] bg-[#c8c8d8] flex items-center justify-center mr-px">
                <svg width="15" height="13" viewBox="0 0 15 13" className="block"><rect x=".5" y=".5" width="14" height="12" fill="#f5f5f5" stroke="#23234f" /><rect x="1" y="1" width="13" height="3" fill="#3838a0" /><path d="M9 6h4M9 8h4M9 10h4" stroke="#444" /></svg>
              </div>
              <div className="w-[227px] h-[19px] bg-[#3f85cc] text-[#b5d2f2] flex items-center pl-[2px] pr-[11px]">
                <span className="flex-1">Ablak/menü</span><span>Shift+Ctrl+W</span>
              </div>
            </div>
          </div>
          <div className="flex pl-[2px] items-start">
            <Tab label="Kezdőlap" />
            <Tab active label="kupak faac1 : 1*" />
          </div>
        </div>
      </div>
      <footer className="h-[28px] flex items-center pl-[6px] pr-[5px] shrink-0 text-[11.6px]">
        <span className="flex-1 text-[11.1px]">Preselected: kupak_faac1.Sketch.Edge4 (8.000000,4.621301,0.008000)</span>
        <svg width="10" height="14" viewBox="0 0 10 14" className="block mr-[7px]"><rect x="1" y="1" width="8" height="12" rx="3.500" fill="none" stroke="#333" strokeWidth="1.200" /><path d="M5 1v5M1 6h8" stroke="#333" /></svg>
        <span className="w-[35px] overflow-hidden">Blende</span>
        <Arrow />
        <div className="w-px h-[18px] bg-[#d0d0d0] ml-[8px] mr-[5px]" />
        <span>27,57 mm x 15,57 mm</span>
      </footer>
      <div className="h-[8px] bg-[#1a1a1a] flex shrink-0 overflow-hidden relative">
        <div className="ml-[48px] w-[344px] h-full bg-[#f0f0f0] border-t border-[#cfcfcf]" />
        <span className="absolute left-[1760px] top-[4px] text-white text-[12px] leading-[12px]">HUN</span>
        <span className="absolute left-[1817px] top-[4px] text-white text-[12px] leading-[12px]">10:40</span>
        <div className="absolute left-[1915px] top-0 w-px h-full bg-[#888]" />
      </div>
    </div>
  );
}
